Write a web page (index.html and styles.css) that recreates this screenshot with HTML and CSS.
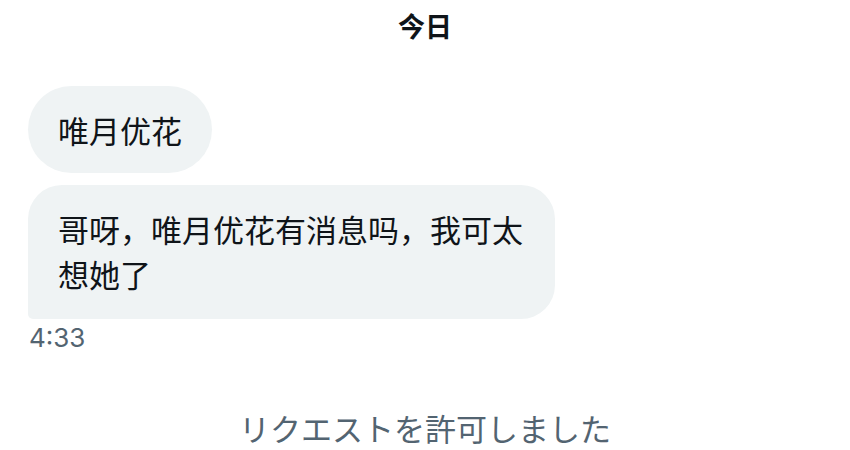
FILE: index.html
```html
<!DOCTYPE html>
<html lang="zh-CN">
<head>
<meta charset="utf-8">
<title>DM</title>
<link rel="stylesheet" href="styles.css">
</head>
<body>
<div class="page">
  <div class="day">今日</div>
  <div class="group">
    <div class="bubble pill">唯月优花</div>
    <div class="bubble last">哥呀，唯月优花有消息吗，我可太想她了</div>
  </div>
  <div class="time">4:33</div>
  <div class="system" lang="ja">リクエストを許可しました</div>
</div>
</body>
</html>
```
FILE: styles.css
```css
html, body {
  margin: 0;
  padding: 0;
  background: #ffffff;
}
.page {
  width: 850px;
  height: 450px;
  overflow: hidden;
  display: flex;
  flex-direction: column;
  font-family: "Noto Sans CJK SC", "Noto Sans CJK JP", sans-serif;
  color: #0f1419;
}
.day {
  text-align: center;
  font-size: 27px;
  font-weight: 700;
  line-height: 36px;
  padding-top: 8px;
}
.group {
  display: flex;
  flex-direction: column;
  align-items: flex-start;
  gap: 12px;
  padding: 0 28px;
  margin-top: 42px;
}
.bubble {
  box-sizing: border-box;
  max-width: 527px;
  background: #eff3f4;
  border-radius: 34px;
  padding: 21px 30px;
  font-size: 31px;
  line-height: 45px;
}
.bubble.pill {
  border-radius: 44px;
}
.bubble.last {
  padding-bottom: 23px;
  border-bottom-left-radius: 5px;
}
.time {
  padding-left: 29px;
  margin-top: 4px;
  font-family: Inter, "Liberation Sans", sans-serif;
  font-size: 26px;
  line-height: 30px;
  color: #536471;
}
.system {
  margin-top: 62px;
  text-align: center;
  font-family: "Liberation Sans", "Noto Sans CJK JP", sans-serif;
  font-size: 31px;
  line-height: 32px;
  color: #536471;
}
```
